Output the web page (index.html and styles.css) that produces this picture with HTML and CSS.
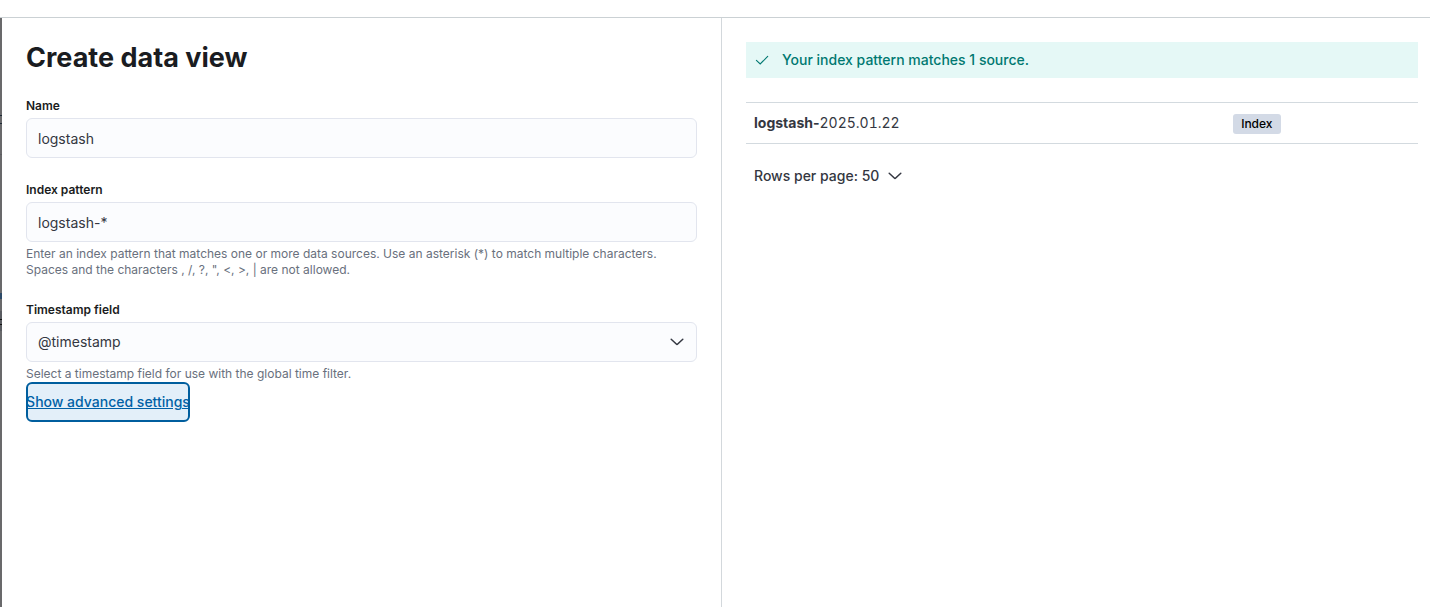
FILE: index.html
```
<!DOCTYPE html>
<html lang="en">
<head>
<meta charset="utf-8">
<meta name="viewport" content="width=device-width, initial-scale=1">
<title>Create data view</title>
<link rel="stylesheet" href="styles.css">
</head>
<body>
<header class="topbar"></header>
<div class="shell">
  <div class="underlay"></div>
  <main class="flyout">
    <form class="editor">
      <h1 class="title">Create data view</h1>
      <div class="field">
        <label class="label" for="name">Name</label>
        <input class="control" id="name" type="text" value="logstash">
      </div>
      <div class="field">
        <label class="label" for="pattern">Index pattern</label>
        <input class="control" id="pattern" type="text" value="logstash-*" aria-describedby="pattern-help">
        <p class="help" id="pattern-help">Enter an index pattern that matches one or more data sources. Use an asterisk (*) to match multiple characters. Spaces and the characters , /, ?, ", &lt;, &gt;, | are not allowed.</p>
      </div>
      <div class="field">
        <label class="label" for="timestamp">Timestamp field</label>
        <div class="select-wrap">
          <select class="control select" id="timestamp" aria-describedby="timestamp-help"><option>@timestamp</option></select>
          <svg class="icon select-icon" viewBox="0 0 16 16" aria-hidden="true"><path d="M2.2 5.2 7.3 10a1 1 0 0 0 1.4 0L13.8 5.2"/></svg>
        </div>
        <p class="help" id="timestamp-help">Select a timestamp field for use with the global time filter.</p>
      </div>
      <button class="advanced" type="button">Show advanced settings</button>
    </form>
    <section class="preview">
      <div class="callout">
        <svg class="icon check" viewBox="0 0 16 16" aria-hidden="true"><path d="M2.4 8.3 6.2 12 13.7 4.4"/></svg>
        <p class="callout-text">Your index pattern matches 1 source.</p>
      </div>
      <table class="sources">
        <tbody>
          <tr>
            <td class="source-name"><strong>logstash-</strong><span class="date">2025.01.22</span></td>
            <td class="source-type"><span class="badge">Index</span></td>
          </tr>
        </tbody>
      </table>
      <button class="rows" type="button">
        <span>Rows per page: 50</span>
        <svg class="icon" viewBox="0 0 16 16" aria-hidden="true"><path d="M2.2 5.2 7.3 10a1 1 0 0 0 1.4 0L13.8 5.2"/></svg>
      </button>
    </section>
  </main>
</div>
</body>
</html>
```
FILE: styles.css
```
* { box-sizing: border-box; }

body {
  display: flex;
  flex-direction: column;
  min-height: 100vh;
  margin: 0;
  background: #fff;
  color: #343741;
  font: 400 14px/20px Inter, "Liberation Sans", sans-serif;
}

p, h1 { margin: 0; }

button, input, select { font: inherit; color: inherit; }

.topbar {
  height: 18px;
  border-bottom: 1px solid #cbd1d4;
}

.shell { display: flex; flex: 1; }

/* Dimmed page that shows beside the flyout */
.underlay {
  width: 2px;
  background: linear-gradient(#69696b 97px, #1c2a35 97px 98px, #69696b 98px 105px, #1c2a35 105px 106px, #69696b 106px 136px, #5c5d60 136px 137px, #69696b 137px 275px, #2d4a68 275px 281px, #69696b 281px 293px, #595b60 293px 301px, #111 301px 302px, #595b60 302px 306px, #111 306px 307px, #595b60 307px 313px, #69696b 313px);
}

.flyout {
  display: grid;
  flex: 1;
  grid-template-columns: calc(50% + 6px) minmax(0, 1fr);
}

.editor { padding: 24px; border-right: 1px solid #d3d8dc; }

.preview { padding: 24px 12px 24px 24px; }

.title {
  margin-bottom: 24px;
  color: #1a1c21;
  font-size: 27px;
  font-weight: 700;
  line-height: 32px;
}

.field + .field { margin-top: 24px; }

.label {
  display: block;
  margin-bottom: 4px;
  color: #1a1c21;
  font-size: 12px;
  font-weight: 600;
  line-height: 16px;
}

.control {
  display: block;
  width: 100%;
  height: 40px;
  padding: 0 11px;
  border: 1px solid #e2e5ee;
  border-radius: 6px;
  background: #fbfcfe;
}

.select-wrap { display: grid; align-items: center; }

.select-wrap > * { grid-area: 1 / 1; }

.select { appearance: none; }

.select-icon { justify-self: end; margin-right: 12px; pointer-events: none; }

.help {
  padding-top: 4px;
  color: #69707d;
  font-size: 12px;
  line-height: 16px;
}

.icon {
  flex: none;
  width: 16px;
  height: 16px;
  fill: none;
  stroke: currentColor;
  stroke-width: 1.5;
  stroke-linecap: round;
}

.advanced {
  display: flex;
  align-items: center;
  justify-content: center;
  width: 164px;
  height: 40px;
  padding: 0;
  overflow: hidden;
  border: 2px solid #005e9e;
  border-radius: 6px;
  background: #e3eff9;
  color: #0061a6;
  font-weight: 500;
  text-decoration: underline;
  white-space: nowrap;
}

.callout {
  display: flex;
  align-items: center;
  gap: 12px;
  margin-bottom: 24px;
  padding: 8px;
  background: #e5f8f6;
  color: #007871;
  font-weight: 500;
}

.check { stroke-width: 1.1; }

.sources {
  width: 100%;
  border-collapse: collapse;
  table-layout: fixed;
}

.sources td {
  height: 41px;
  padding: 0 8px;
  border-top: 1px solid #d3dadf;
  border-bottom: 1px solid #d3dadf;
  text-align: left;
}

.sources strong { font-weight: 700; }

.date { font-variant-numeric: tabular-nums; }

.source-name { width: 71.3%; }

.badge {
  display: inline-block;
  padding: 0 8px;
  border-radius: 3px;
  background: #d3dae6;
  color: #000;
  font-size: 12px;
  font-weight: 500;
  vertical-align: middle;
}

.rows {
  display: flex;
  align-items: center;
  gap: 8px;
  height: 24px;
  margin-top: 20px;
  padding: 0 8px;
  border: 0;
  background: none;
  font-weight: 500;
}
```
